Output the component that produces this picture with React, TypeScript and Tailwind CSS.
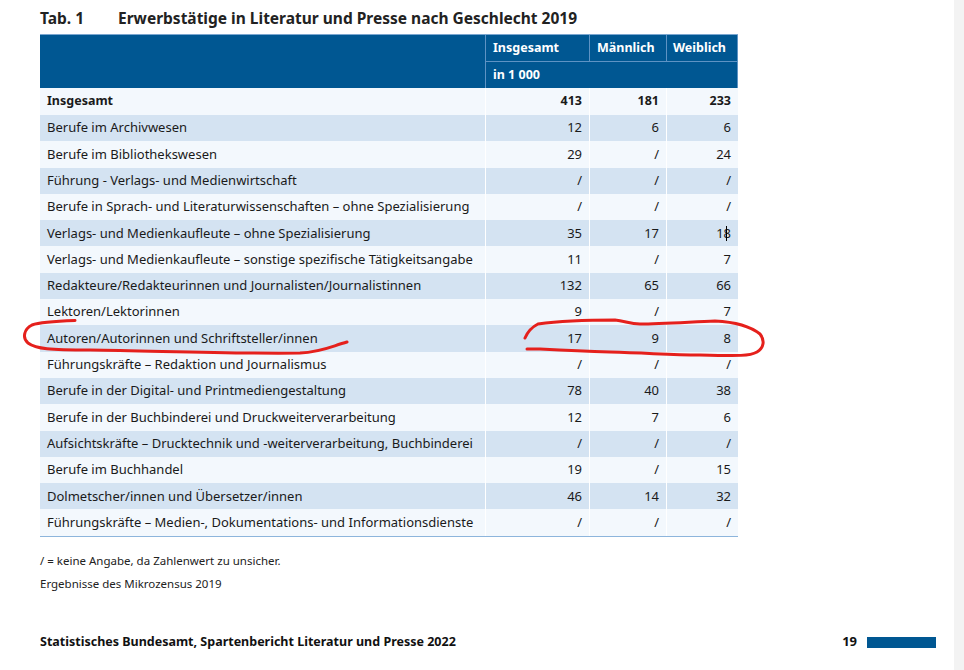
import React from "react";

const rows: [string, string, string, string][] = [
  ["Berufe im Archivwesen", "12", "6", "6"],
  ["Berufe im Bibliothekswesen", "29", "/", "24"],
  ["Führung - Verlags- und Medienwirtschaft", "/", "/", "/"],
  ["Berufe in Sprach- und Literaturwissenschaften – ohne Spezialisierung", "/", "/", "/"],
  ["Verlags- und Medienkaufleute – ohne Spezialisierung", "35", "17", "18"],
  ["Verlags- und Medienkaufleute – sonstige spezifische Tätigkeitsangabe", "11", "/", "7"],
  ["Redakteure/Redakteurinnen und Journalisten/Journalistinnen", "132", "65", "66"],
  ["Lektoren/Lektorinnen", "9", "/", "7"],
  ["Autoren/Autorinnen und Schriftsteller/innen", "17", "9", "8"],
  ["Führungskräfte – Redaktion und Journalismus", "/", "/", "/"],
  ["Berufe in der Digital- und Printmediengestaltung", "78", "40", "38"],
  ["Berufe in der Buchbinderei und Druckweiterverarbeitung", "12", "7", "6"],
  ["Aufsichtskräfte – Drucktechnik und -weiterverarbeitung, Buchbinderei", "/", "/", "/"],
  ["Berufe im Buchhandel", "19", "/", "15"],
  ["Dolmetscher/innen und Übersetzer/innen", "46", "14", "32"],
  ["Führungskräfte – Medien-, Dokumentations- und Informationsdienste", "/", "/", "/"],
];

export default function App() {
  const font = { fontFamily: '"Noto Sans", "Open Sans", sans-serif' };
  return (
    <div className="relative flex h-[670px] w-[964px] bg-white text-[#1a1a1a]" style={font}>
      <div className="w-[954px] bg-white pl-[40px] pt-[5px]">
        <div className="flex h-[27px] items-center text-[15.5px] font-bold text-[#222]">
          <span className="w-[78px]">Tab. 1</span>
          <span>Erwerbstätige in Literatur und Presse nach Geschlecht 2019</span>
        </div>
        <div className="mt-[2px] w-[698px] text-[13px]">
          {/* header */}
          <div className="flex border-t border-[#7aa6d0] bg-[#005792] text-[12.5px] font-bold text-white">
            <div className="w-[445px]" />
            <div className="flex flex-1 flex-col">
              <div className="flex h-[27px] border-b border-[#5e93c4]">
                <div className="flex w-[104px] items-center border-l border-[#5e93c4] px-[7px]">Insgesamt</div>
                <div className="flex w-[77px] items-center border-l border-[#5e93c4] px-[7px]">Männlich</div>
                <div className="flex flex-1 items-center border-l border-r border-[#5e93c4] px-[6px]">Weiblich</div>
              </div>
              <div className="flex h-[26px] items-center border-l border-r border-[#5e93c4] px-[7px]">in 1 000</div>
            </div>
          </div>
          {/* body */}
          <div className="flex h-[27px] bg-[#f3f8fd] text-[12.5px] font-bold">
            <div className="flex w-[445px] items-center px-[7px]">Insgesamt</div>
            <div className="flex w-[104px] items-center justify-end border-l border-white px-[7px]">413</div>
            <div className="flex w-[77px] items-center justify-end border-l border-white px-[7px]">181</div>
            <div className="flex flex-1 items-center justify-end border-l border-white px-[7px]">233</div>
          </div>
          {rows.map((r, i) => (
            <div
              key={i}
              className={
                "flex h-[26.3px] " + (i % 2 === 0 ? "bg-[#d4e3f2]" : "bg-[#f3f8fd]")
              }
            >
              <div className="flex w-[445px] items-center whitespace-nowrap px-[7px]">{r[0]}</div>
              <div className="flex w-[104px] items-center justify-end border-l border-white px-[7px]">{r[1]}</div>
              <div className="flex w-[77px] items-center justify-end border-l border-white px-[7px]">{r[2]}</div>
              <div className="relative flex flex-1 items-center justify-end border-l border-white px-[7px]">
                {r[3]}
                {i === 4 && <span className="absolute right-[11px] top-[6px] h-[15px] w-px bg-black" />}
              </div>
            </div>
          ))}
          <div className="h-px bg-[#8db5dc]" />
        </div>
        <div className="mt-[15px] text-[11.5px] text-[#222]">/ = keine Angabe, da Zahlenwert zu unsicher.</div>
        <div className="mt-[6px] text-[11.5px] text-[#222]">Ergebnisse des Mikrozensus 2019</div>
        <div className="mt-[40px] flex w-[896px] items-center text-[12.5px] font-bold text-[#111]">
          <span className="flex-1">Statistisches Bundesamt, Spartenbericht Literatur und Presse 2022</span>
          <span className="mr-[10px] text-[13px]">19</span>
          <span className="h-[11px] w-[69px] bg-[#005792]" />
        </div>
      </div>
      <div className="flex-1 bg-[#f3f3f3]" />
      <svg className="pointer-events-none absolute left-0 top-0" width="964" height="670">
        <path
          d="M75 320.5 C60 321 40 322 32 325 C24 329 22 338 28 343 C36 349 50 350 90 350 C160 351 240 354 300 353 C322 352 332 346 347 342"
          fill="none"
          stroke="#e5201c"
          strokeWidth="3"
          strokeLinecap="round"
        />
        <path
          d="M525 338 C528 331 532 327 538 324 C560 321 590 320 615 320 C625 321 630 324 640 324 C660 324 690 322 715 321 C735 322 750 326 760 334 C765 340 764 348 757 352 C750 356 740 356 700 355 C670 355 650 353 610 352 C580 351 560 350 540 349 C533 349 529 349 527 349"
          fill="none"
          stroke="#e5201c"
          strokeWidth="3"
          strokeLinecap="round"
        />
      </svg>
    </div>
  );
}
